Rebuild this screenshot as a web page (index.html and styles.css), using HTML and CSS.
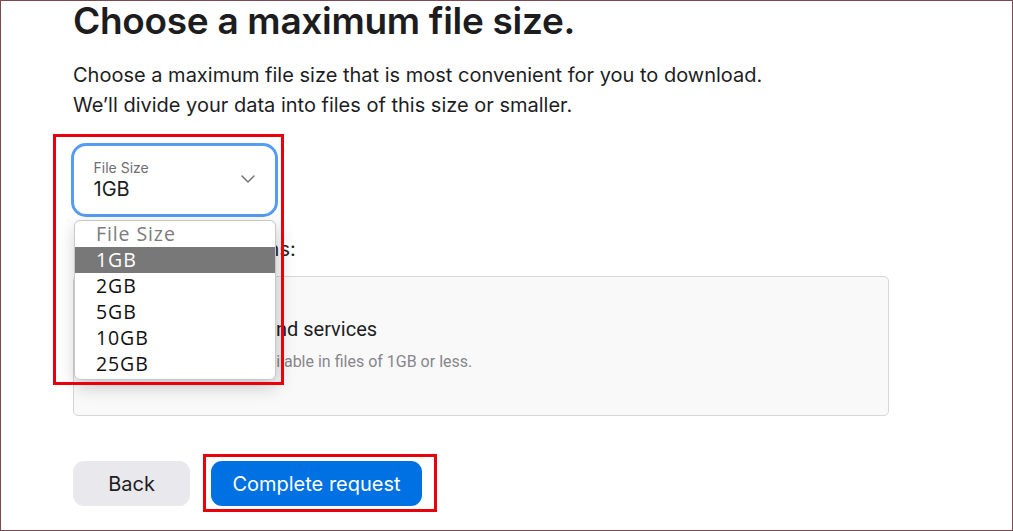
FILE: index.html
```html
<!DOCTYPE html>
<html lang="en">
<head>
<meta charset="utf-8">
<title>Choose a maximum file size</title>
<link rel="stylesheet" href="styles.css">
</head>
<body>
<div class="frame">
  <main class="content">
    <h1 class="title">Choose a maximum file size.</h1>
    <p class="lead">Choose a maximum file size that is most convenient for you to download.<br>We’ll divide your data into files of this size or smaller.</p>

    <div class="select-area">
      <div class="select">
        <div class="select-text">
          <span class="select-label">File Size</span>
          <span class="select-value">1GB</span>
        </div>
        <svg class="chevron" width="14" height="8" viewBox="0 0 14 8"><path d="M1 1l6 6 6-6" fill="none" stroke="#777" stroke-width="1.5" stroke-linecap="round" stroke-linejoin="round"/></svg>
      </div>
      <ul class="menu">
        <li class="menu-head">File Size</li>
        <li class="menu-item active">1GB</li>
        <li class="menu-item">2GB</li>
        <li class="menu-item">5GB</li>
        <li class="menu-item">10GB</li>
        <li class="menu-item">25GB</li>
      </ul>
      <div class="mark mark-select"></div>
    </div>

    <p class="section-label">Review your selections:</p>
    <div class="card">
      <div class="card-title">Apple media and services</div>
      <div class="card-desc">Copies will be available in files of 1GB or less.</div>
    </div>

    <div class="actions">
      <button class="btn btn-back">Back</button>
      <div class="btn-wrap">
        <button class="btn btn-primary">Complete request</button>
        <div class="mark mark-btn"></div>
      </div>
    </div>
  </main>
</div>
</body>
</html>
```

FILE: styles.css
```css
* { box-sizing: border-box; }
html, body { margin: 0; padding: 0; background: #fff; }
body { font-family: Inter, "Noto Sans", sans-serif; color: #1d1d1f; }

.frame {
  width: 1013px;
  height: 531px;
  border: 1px solid #7a4a52;
  overflow: hidden;
}

.content {
  padding-left: 72px;
  width: 888px;
}

.title {
  margin: -2px 0 0;
  font-size: 37px;
  line-height: 44px;
  font-weight: 600;
  letter-spacing: -0.3px;
}

.lead {
  margin: 17px 0 0;
  font-size: 20px;
  line-height: 30px;
  color: #1d1d1f;
}

.select-area {
  position: relative;
  margin: 23px 0 0 -2px;
  width: 207px;
}

.select {
  height: 74px;
  border: 3.5px solid #559cf2;
  border-radius: 15px;
  background: #fff;
  display: flex;
  align-items: center;
  justify-content: space-between;
  padding: 0 20px 0 19.5px;
}

.select-text { display: flex; flex-direction: column; }
.select-label { font-size: 14px; line-height: 18px; color: #6e6e73; }
.select-value { font-size: 20px; line-height: 24px; color: #1d1d1f; }
.chevron { margin-top: -2px; }

.menu {
  position: absolute;
  left: 3px;
  top: 77px;
  width: 202px;
  margin: 0;
  padding: 0 0 2px;
  list-style: none;
  background: #fff;
  border: 1px solid #c8c8c8;
  border-radius: 6px;
  box-shadow: 2px 6px 18px rgba(0,0,0,0.22);
  font-family: "Open Sans", "Noto Sans", sans-serif;
  font-size: 19.5px;
  z-index: 2;
}
.menu li {
  height: 26px;
  line-height: 26px;
  padding-left: 21px;
  letter-spacing: 0.9px;
}
.menu-head { color: #7c7c7c; }
.menu-item { color: #111; }
.menu-item.active { background: #787878; color: #fff; }

.mark {
  position: absolute;
  border: 3px solid #e8000b;
  pointer-events: none;
  z-index: 3;
}
.mark-select { left: -18px; top: -9px; width: 231px; height: 251px; }

.section-label {
  margin: 0;
  margin-top: 17px;
  font-size: 20px;
  line-height: 30px;
}

.card {
  margin-top: 12px;
  height: 140px;
  background: #f9f9f9;
  border: 1px solid #d6d6d6;
  border-radius: 5px;
  padding: 39px 0 0 75px;
  font-family: Roboto, "Noto Sans", sans-serif;
}
.card-title { font-size: 20px; line-height: 26px; color: #1d1d1f; }
.card-desc { margin-top: 9px; font-size: 16px; line-height: 22px; color: #86868b; }

.actions {
  margin-top: 45px;
  display: flex;
  gap: 21px;
}
.btn {
  height: 45px;
  border: none;
  border-radius: 11px;
  font-family: Inter, "Noto Sans", sans-serif;
  font-size: 20px;
  padding: 0;
}
.btn-back { width: 117px; background: #e8e8ed; color: #1d1d1f; }
.btn-wrap { position: relative; }
.btn-primary { width: 211px; background: #0071e3; color: #fff; }
.mark-btn { left: -8px; top: -7px; width: 234px; height: 58px; }
```
